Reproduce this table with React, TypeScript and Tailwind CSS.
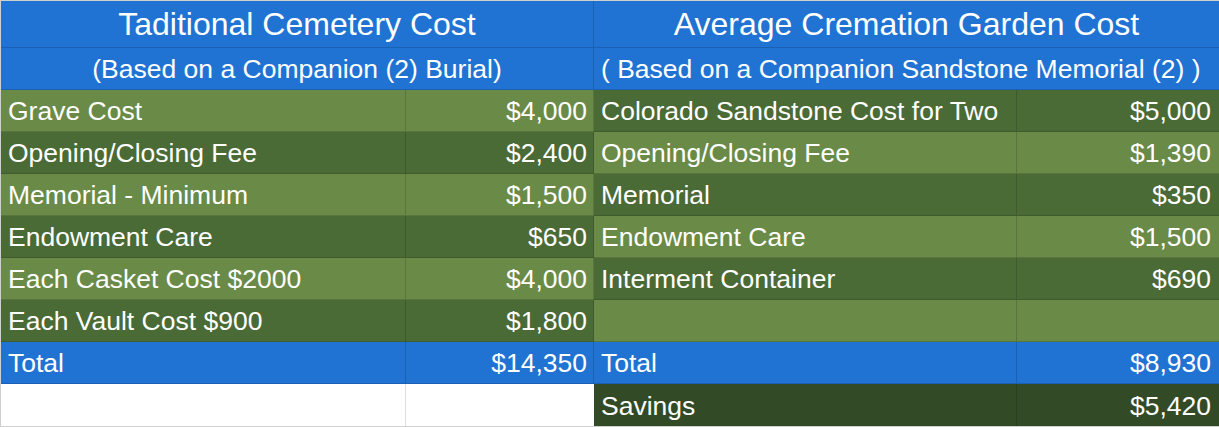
import React from "react";

const BLUE = "bg-[#2073d3]";
const LG = "bg-[#6a8a47]";
const DG = "bg-[#4a6a36]";
const SV = "bg-[#324b26]";

type Row = { l: string; lv: string; lc: string; r: string; rv: string; rc: string };

const rows: Row[] = [
  { l: "Grave Cost", lv: "$4,000", lc: LG, r: "Colorado Sandstone Cost for Two", rv: "$5,000", rc: DG },
  { l: "Opening/Closing Fee", lv: "$2,400", lc: DG, r: "Opening/Closing Fee", rv: "$1,390", rc: LG },
  { l: "Memorial - Minimum", lv: "$1,500", lc: LG, r: "Memorial", rv: "$350", rc: DG },
  { l: "Endowment Care", lv: "$650", lc: DG, r: "Endowment Care", rv: "$1,500", rc: LG },
  { l: "Each Casket Cost $2000", lv: "$4,000", lc: LG, r: "Interment Container", rv: "$690", rc: DG },
  { l: "Each Vault Cost $900", lv: "$1,800", lc: DG, r: "", rv: "", rc: LG },
];

const cell = "h-[42px] pt-[2px] flex items-center text-white text-[26.5px] leading-none border-r border-b border-black/15 whitespace-nowrap";

export default function App() {
  return (
    <div
      className="w-[1219px] h-[427px] bg-white border-t border-l border-b border-[#d0d0d0] overflow-hidden"
      style={{ fontFamily: '"Liberation Sans", Arial, sans-serif' }}
    >
      <div className="grid grid-cols-[405px_188px_423px_202px]">
        <div className={`col-span-2 h-[47px] ${BLUE} flex items-center justify-center text-white text-[32px] leading-none border-r border-b border-black/15`}>
          Taditional Cemetery Cost
        </div>
        <div className={`col-span-2 h-[47px] ${BLUE} flex items-center justify-center text-white text-[32px] leading-none border-b border-black/15`}>
          Average Cremation Garden Cost
        </div>
        <div className={`col-span-2 ${BLUE} ${cell} justify-center text-[25.7px]`}>
          (Based on a Companion (2) Burial)
        </div>
        <div className={`col-span-2 ${BLUE} ${cell} pl-[7px] text-[25.7px] border-r-0`}>
          ( Based on a Companion Sandstone Memorial (2) )
        </div>
        {rows.map((r, i) => (
          <React.Fragment key={i}>
            <div className={`${r.lc} ${cell} pl-[7px]`}>{r.l}</div>
            <div className={`${r.lc} ${cell} justify-end pr-[6px]`}>{r.lv}</div>
            <div className={`${r.rc} ${cell} pl-[7px]`}>{r.r}</div>
            <div className={`${r.rc} ${cell} justify-end pr-[8px] border-r-0`}>{r.rv}</div>
          </React.Fragment>
        ))}
        <div className={`${BLUE} ${cell} pl-[7px]`}>Total</div>
        <div className={`${BLUE} ${cell} justify-end pr-[6px]`}>$14,350</div>
        <div className={`${BLUE} ${cell} pl-[7px]`}>Total</div>
        <div className={`${BLUE} ${cell} justify-end pr-[8px] border-r-0`}>$8,930</div>
        <div className="h-[42px] bg-white border-r border-[#e0e0e0]"></div>
        <div className="h-[42px] bg-white"></div>
        <div className={`${SV} ${cell} pl-[7px] border-b-0`}>Savings</div>
        <div className={`${SV} ${cell} justify-end pr-[8px] border-r-0 border-b-0`}>$5,420</div>
      </div>
    </div>
  );
}
